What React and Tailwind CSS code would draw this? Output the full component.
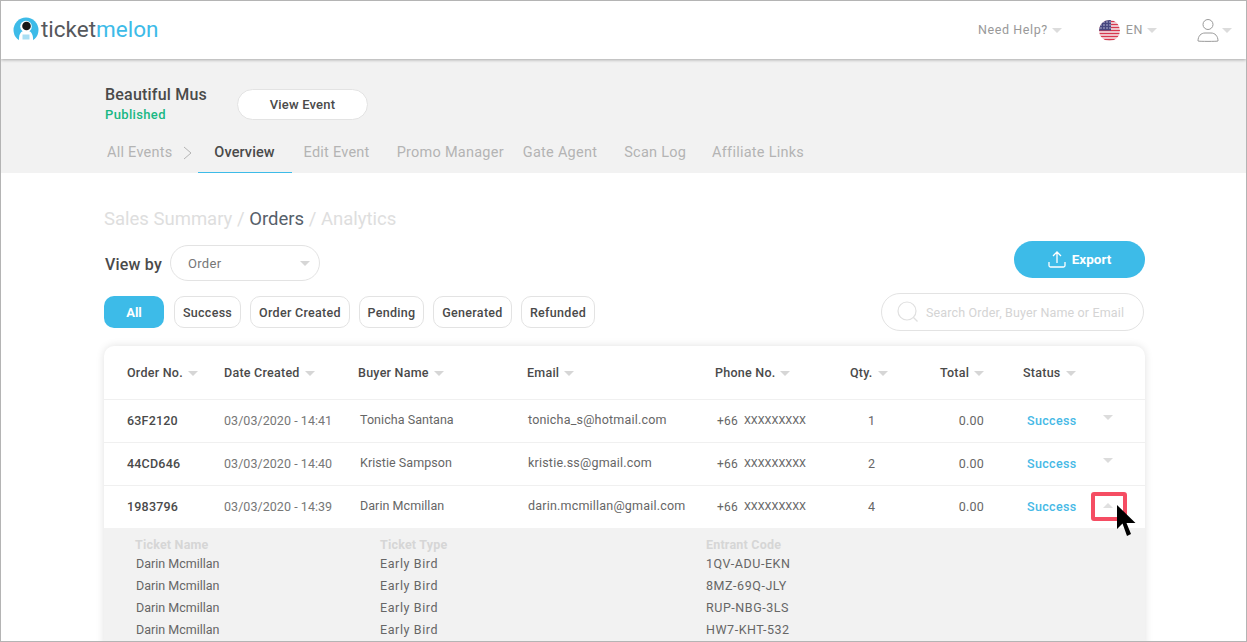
import React from "react";

const Caret = ({ className = "" }) => (
  <svg width="10" height="5" viewBox="0 0 10 5" className={className}><path d="M0 0h10L5 5z" fill="currentColor" /></svg>
);

const Logo = () => (
  <svg width="26" height="26" viewBox="0 0 26 26">
    <circle cx="13" cy="13" r="12.5" fill="#3dbbe8" />
    <path d="M6 25c-.5-6 1-10 4-11h6c3 1 4.500 5 4 11-2 1-5 1.500-7 1.500S8 26 6 25z" fill="#fff" />
    <circle cx="13" cy="9.500" r="5.800" fill="#fff" />
    <circle cx="13.500" cy="9" r="4.300" fill="#161616" />
    <rect x="9.500" y="17.500" width="7" height="5" fill="#a8def3" />
  </svg>
);

const Flag = () => (
  <svg width="21" height="21" viewBox="0 0 21 21">
    <defs><clipPath id="fc"><circle cx="10.500" cy="10.500" r="10.500" /></clipPath></defs>
    <g clipPath="url(#fc)">
      <rect width="21" height="21" fill="#f5f0f0" />
      {[1.5, 4.5, 7.5, 10.5, 13.5, 16.5, 19.5].map((y) => <rect key={y} y={y - 0.75} width="21" height="1.500" fill="#d8374f" />)}
      <rect width="12" height="10.500" fill="#46467f" />
      {[2, 5, 8].map((y) => [2, 5, 8, 11].map((x) => <circle key={x + "-" + y} cx={x} cy={y} r="0.700" fill="#d9d9ea" />))}
    </g>
  </svg>
);

const User = () => (
  <svg width="22" height="24" viewBox="0 0 22 24" fill="none" stroke="#9a9a9a" strokeWidth="1">
    <circle cx="11" cy="6.500" r="5" />
    <path d="M1 23c0-5 3-8 7-8h6c4 0 7 3 7 8 0 .5-20 .5-20 0z" />
  </svg>
);

const tabs = ["Edit Event", "Promo Manager", "Gate Agent", "Scan Log", "Affiliate Links"];
const tabGap = ["mr-[27px]", "mr-[19px]", "mr-[27px]", "mr-[26px]", ""];
const chips = [["Success", "w-[67px]"], ["Order Created", "w-[100px]"], ["Pending", "w-[65px]"], ["Generated", "w-[79px]"], ["Refunded", "w-[74px]"]];
const heads = ["Order No.", "Date Created", "Buyer Name", "Email", "Phone No.", "Qty.", "Total", "Status"];
const cols = "grid grid-cols-[97px_134px_169px_188px_135px_90px_83px_1fr] pl-[23px] items-center";

const rows = [
  { id: "63F2120", date: "03/03/2020 - 14:41", name: "Tonicha Santana", email: "tonicha_s@hotmail.com", qty: 1 },
  { id: "44CD646", date: "03/03/2020 - 14:40", name: "Kristie Sampson", email: "kristie.ss@gmail.com", qty: 2 },
  { id: "1983796", date: "03/03/2020 - 14:39", name: "Darin Mcmillan", email: "darin.mcmillan@gmail.com", qty: 4, open: true },
];
const codes = ["1QV-ADU-EKN", "8MZ-69Q-JLY", "RUP-NBG-3LS", "HW7-KHT-532"];

export default function App() {
  return (
    <div className="relative w-[1247px] h-[642px] overflow-hidden bg-white border border-[#b4b4b4] font-['Roboto',sans-serif] text-[#4a4a4a]">
      <header className="relative z-10 h-[58px] bg-white shadow-[0_1px_3px_rgba(0,0,0,0.3)] flex items-center pl-[12px] pr-[14px]">
        <Logo />
        <span className="ml-[2px] text-[22.5px] leading-none mt-[-1px]">
          <span className="text-[#55585c]">ticket</span><span className="text-[#3dbbe8]">melon</span>
        </span>
        <div className="ml-auto flex items-center text-[12.5px] text-[#999] tracking-[0.6px]">
          <span>Need Help?</span>
          <Caret className="ml-[4px] text-[#dcdcdc]" />
          <span className="ml-[37px]"><Flag /></span>
          <span className="ml-[6px]">EN</span>
          <Caret className="ml-[4px] text-[#dcdcdc]" />
          <span className="ml-[40px]"><User /></span>
          <Caret className="ml-[3px] text-[#dcdcdc]" />
        </div>
      </header>

      <section className="h-[114px] bg-[#f2f2f2] pl-[103px] flex flex-col">
        <div className="flex items-start mt-[26px]">
          <div className="ml-px">
            <div className="text-[16px] leading-[20px] font-medium text-[#4a4a4a] tracking-[0.2px]">Beautiful Mus</div>
            <div className="text-[13px] leading-[18px] font-medium text-[#19b884] tracking-[0.35px] mt-[1px]">Published</div>
          </div>
          <button className="ml-[30px] mt-[4px] w-[131px] h-[31px] rounded-full bg-white border border-[#e3e3e3] text-[13px] font-medium text-[#4a4a4a] tracking-[0.2px]">View Event</button>
        </div>
        <nav className="flex items-stretch h-[37px] mt-auto pb-[4px] text-[14.5px] text-[#b4b4b4] tracking-[0.25px]">
          <span className="ml-[3px] flex items-center">All Events</span>
          <svg width="9" height="14" viewBox="0 0 9 14" className="ml-[10px] self-center" fill="none" stroke="#b4b4b4"><path d="M1 1l7 6-7 6" /></svg>
          <span className="ml-[6px] w-[94px] flex items-center justify-center border-b border-[#3dbbe8] font-medium text-[#4a4a4a] mr-[12px] mb-[-4px] pb-[2px] tracking-[0.1px]">Overview</span>
          {tabs.map((t, i) => <span key={t} className={"flex items-center " + tabGap[i]}>{t}</span>)}
        </nav>
      </section>

      <main className="pl-[103px] w-[1144px]">
        <div className="mt-[33px] text-[18.5px] leading-[26px] text-[#dedede]">
          Sales Summary / <span className="text-[#56606a]">Orders</span> / Analytics
        </div>
        <div className="flex items-start mt-[9px] h-[46px]">
          <span className="mt-[12px] ml-px text-[16px] font-medium tracking-[0.2px]">View by</span>
          <div className="ml-[8px] mt-[4px] w-[150px] h-[36px] rounded-full border border-[#e3e3e3] flex items-center pl-[17px] pr-[9px] text-[13px] text-[#777] tracking-[0.3px]">
            <span className="mt-[1px]">Order</span><Caret className="ml-auto text-[#d6d6d6]" />
          </div>
          <button className="ml-auto w-[131px] h-[37px] rounded-full bg-[#3dbbe8] text-white flex items-center justify-center text-[13.5px] font-bold">
            <svg width="18" height="18" viewBox="0 0 18 18" fill="none" stroke="#fff" strokeWidth="1.300" className="mr-[6px]"><path d="M9 12V1.500M5 5l4-4 4 4M1 11v3.500c0 1 .5 1.500 1.500 1.500h13c1 0 1.500-.5 1.500-1.500V11" /></svg>
            Export
          </button>
        </div>
        <div className="flex items-center mt-[6px] h-[38px]">
          <button className="w-[60px] h-[32px] rounded-[10px] bg-[#3dbbe8] text-white text-[13px] font-bold mr-[10px] pt-[1px]">All</button>
          {chips.map(([c, w]) => (
            <button key={c} className={"h-[32px] mr-[9px] rounded-[10px] border border-[#e3e3e3] bg-white text-[12.500px] font-medium text-[#4a4a4a] tracking-[0.3px] pt-[2px] " + w}>{c}</button>
          ))}
          <div className="ml-auto mr-px w-[263px] h-[38px] rounded-full border border-[#e3e3e3] flex items-center pl-[15px] text-[12.500px] text-[#d4d4d4] tracking-[0.15px]">
            <svg width="22" height="22" viewBox="0 0 22 22" fill="none" stroke="#e0e0e0" strokeWidth="1.200" className="mr-[7px]"><circle cx="10" cy="10" r="9" /><path d="M16.500 16.500l4 4" /></svg>
            <span className="mt-[2px]">Search Order, Buyer Name or Email</span>
          </div>
        </div>

        <div className="mt-[15px] w-[1041px] rounded-t-[10px] bg-white shadow-[0_0_8px_rgba(0,0,0,0.12)]">
          <div className={cols + " h-[53px] pt-[1px] text-[12.500px] font-medium text-[#4a4a4a] tracking-[0.25px]"}>
            {heads.map((h) => <span key={h} className="flex items-center">{h}<Caret className="ml-[5px] text-[#d6d6d6]" /></span>)}
          </div>
          {rows.map((r) => (
            <div key={r.id} className={cols + " h-[43px] border-t border-[#f0f0f0] text-[12.500px] tracking-[0.2px] text-[#666]"}>
              <span className="font-medium text-[#4a4a4a]">{r.id}</span>
              <span className="text-[#777] tracking-[0.05px]">{r.date}</span>
              <span className="pl-[2px] mt-[-2px] tracking-[0.05px]">{r.name}</span>
              <span className="pl-[1px] mt-[-2px]">{r.email}</span>
              <span className="pl-[2px] text-[12px] flex items-center">+66<span className="ml-[6px] text-[11px] tracking-[0px]">XXXXXXXXX</span></span>
              <span className="pl-[18px]">{r.qty}</span>
              <span className="text-right pr-[39px] ml-[-3px]">0.00</span>
              <span className="flex items-center font-medium text-[#46b9e6] pl-[4px] tracking-[0.35px]">
                Success
                {r.open
                  ? <Caret className="ml-[26px] mt-[-3px] rotate-180 text-[#e0e0e0]" />
                  : <Caret className="ml-[26px] mt-[-7px] text-[#dcdcdc]" />}
              </span>
            </div>
          ))}
          <div className="bg-[#f2f2f2] pt-[9px] pl-[31px] h-[120px] text-[12.500px] text-[#666]">
            <div className="grid grid-cols-[245px_326px_1fr] font-bold text-[#d6d6d6] leading-[15px] tracking-[0.2px] mb-[1px]">
              <span>Ticket Name</span><span>Ticket Type</span><span>Entrant Code</span>
            </div>
            {codes.map((c) => (
              <div key={c} className="grid grid-cols-[245px_326px_1fr] h-[22px] items-center pt-[1px]">
                <span className="pl-[1px] mt-[-1px]">Darin Mcmillan</span>
                <span className="tracking-[0.6px]">Early Bird</span>
                <span className="tracking-[0.55px]">{c}</span>
              </div>
            ))}
          </div>
        </div>
      </main>

      <div className="absolute left-[1090px] top-[491px] w-[36px] h-[29px] rounded-[3px] border-[4px] border-[#f54d63]" />
      <svg width="20" height="32" viewBox="0 0 20 32" className="absolute left-[1115px] top-[504px]">
        <path d="M1 0v24l5.500-5.500L11 31l4-2-4.500-11H19.500z" fill="#000" />
      </svg>
    </div>
  );
}
